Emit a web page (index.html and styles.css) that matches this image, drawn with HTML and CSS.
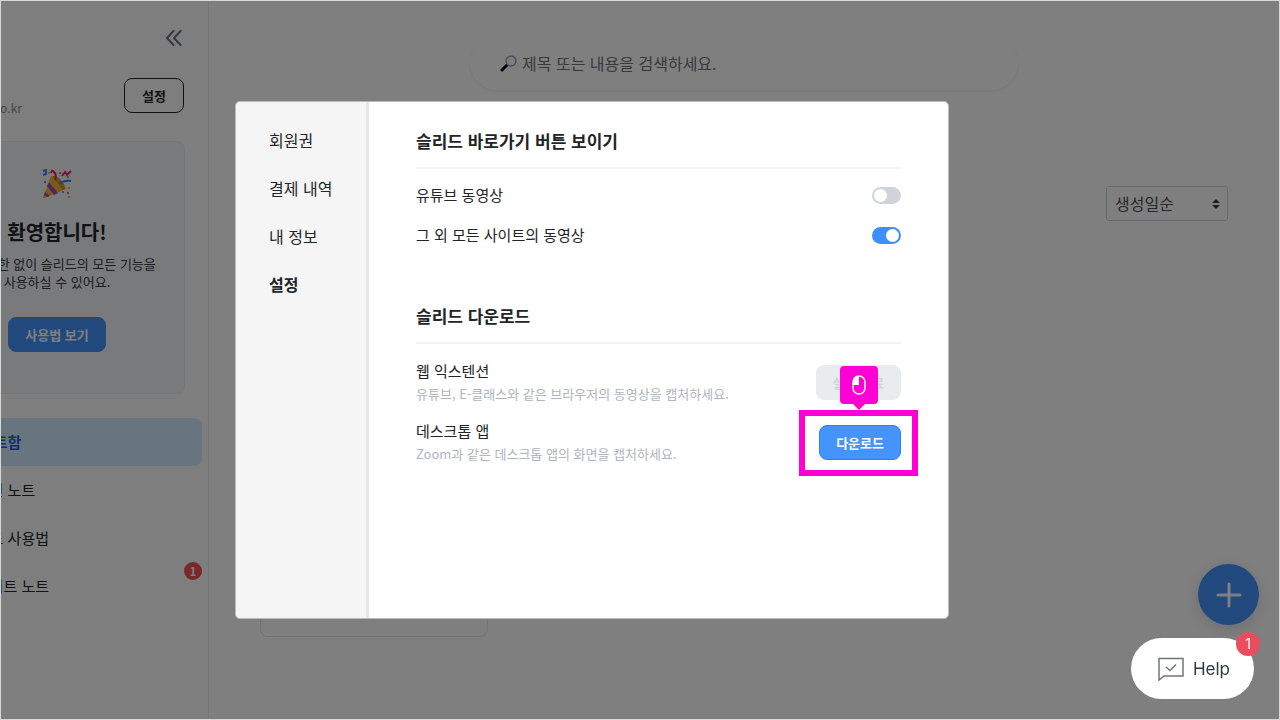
FILE: index.html
```html
<!DOCTYPE html>
<html lang="ko">
  <head>
    <meta charset="UTF-8" />
    <meta name="viewport" content="width=device-width, initial-scale=1.0" />
    <title>슬리드 설정</title>
    <link rel="stylesheet" href="styles.css">
  </head>
  <body>
    <div class="app">
      <aside class="sidebar">
        <button type="button" class="collapse" aria-label="collapse">
          <svg width="16" height="16" viewBox="0 0 16 16" fill="none" stroke="#6c757d" stroke-width="2" stroke-linecap="round" stroke-linejoin="round">
            <path d="M7.500 1L1 8L7.500 15M14.500 1L8 8L14.500 15" />
          </svg>
        </button>
        <div class="account">
          <span class="email">co.kr</span>
          <button type="button" class="settings-button">설정</button>
        </div>
        <div class="welcome">
          <svg class="party" width="32" height="32" viewBox="0 0 32 32" fill="none">
            <path d="M10 7L2 28Q2 30 4 29L25 20Q22 10 10 7Z" fill="#f5b72c" />
            <path d="M8 13L17 24L13 26L6 17Z" fill="#a04bc4" />
            <path d="M11 7L22 21L24 20Q23 12 15 7Z" fill="#d9951c" />
            <path d="M4 23L9 27L6 28L3 26Z" fill="#a04bc4" />
            <path d="M18 15Q23 11 30 12" stroke="#3b8bea" stroke-width="2" />
            <path d="M14 11Q16 6 13 3Q11 0 10 4" stroke="#e0245e" stroke-width="2" />
            <path d="M21 7L24 3L26 6L30 2" stroke="#e0245e" stroke-width="2" />
            <path d="M2 2L5 1L5 5L2 6" stroke="#3b8bea" stroke-width="2" />
            <g fill="#e0245e"><circle cx="19" cy="4" r="1" /><circle cx="4" cy="13" r="1" /><circle cx="27" cy="24" r="1" /></g>
            <g fill="#3b8bea"><circle cx="22" cy="23" r="1" /><circle cx="27" cy="8" r="1" /></g>
            <g fill="#f09a28"><circle cx="8" cy="4" r="1" /><circle cx="28" cy="19" r="1" /><circle cx="28" cy="28" r="1" /></g>
          </svg>
          <h2 class="welcome-title">환영합니다!</h2>
          <p class="welcome-text">기간 제한 없이 슬리드의 모든 기능을<br />사용하실 수 있어요.</p>
          <button type="button" class="primary-button">사용법 보기</button>
        </div>
        <nav class="menu">
          <a href="#" class="menu-item active">내 노트함</a>
          <a href="#" class="menu-item">공유된 노트</a>
          <a href="#" class="menu-item">슬리드 사용법</a>
          <a href="#" class="menu-item">업데이트 노트<span class="menu-badge">1</span></a>
        </nav>
      </aside>

      <main class="content">
        <label class="search">
          <svg width="18" height="18" viewBox="0 0 18 18" fill="none">
            <path d="M7 11L2 16" stroke="#000" stroke-width="3" stroke-linecap="round" />
            <circle cx="11" cy="7" r="5" fill="#f4f8fb" stroke="#97a4b2" stroke-width="1.500" />
          </svg>
          <input type="text" class="search-input" placeholder="제목 또는 내용을 검색하세요." />
        </label>
        <div class="toolbar">
          <div class="sort">
            <select class="sort-select" aria-label="정렬">
              <option>생성일순</option>
            </select>
            <svg class="sort-arrows" width="8" height="10" viewBox="0 0 8 10" fill="#343a40">
              <path d="M4 0L8 4H0ZM4 10L0 6H8Z" />
            </svg>
          </div>
        </div>
        <div class="note-card"></div>
        <button type="button" class="add-button" aria-label="add">
          <svg width="26" height="26" viewBox="0 0 26 26" stroke="#fff" stroke-width="3" stroke-linecap="round">
            <path d="M13 2V24M2 13H24" />
          </svg>
        </button>
      </main>

      <div class="overlay">
        <div class="modal" role="dialog">
          <nav class="modal-nav">
            <a href="#" class="modal-link">회원권</a>
            <a href="#" class="modal-link">결제 내역</a>
            <a href="#" class="modal-link">내 정보</a>
            <a href="#" class="modal-link current">설정</a>
          </nav>
          <div class="modal-body">
            <section class="section">
              <h3 class="section-title">슬리드 바로가기 버튼 보이기</h3>
              <div class="toggle-row">
                <label for="youtube">유튜브 동영상</label>
                <input type="checkbox" id="youtube" class="toggle" />
              </div>
              <div class="toggle-row">
                <label for="others">그 외 모든 사이트의 동영상</label>
                <input type="checkbox" id="others" class="toggle" checked />
              </div>
            </section>
            <section class="section">
              <h3 class="section-title">슬리드 다운로드</h3>
              <div class="downloads">
                <div class="download-row">
                  <div>
                    <p class="download-name">웹 익스텐션</p>
                    <p class="download-text">유튜브, E-클래스와 같은 브라우저의 동영상을 캡처하세요.</p>
                  </div>
                  <button type="button" class="primary-button disabled" disabled>설치 완료</button>
                </div>
                <div class="download-row">
                  <div>
                    <p class="download-name">데스크톱 앱</p>
                    <p class="download-text">Zoom과 같은 데스크톱 앱의 화면을 캡처하세요.</p>
                  </div>
                  <div class="guide">
                    <button type="button" class="primary-button outlined">다운로드</button>
                    <div class="guide-box"></div>
                    <div class="guide-tip">
                      <svg width="14" height="20" viewBox="0 0 14 20" fill="none">
                        <path d="M7 1Q1 1 1 7V10H7Z" fill="#fff" />
                        <rect x="1" y="1" width="12" height="18" rx="6" stroke="#fff" stroke-width="1.500" />
                      </svg>
                    </div>
                  </div>
                </div>
              </div>
            </section>
          </div>
        </div>
      </div>
    </div>

    <button type="button" class="help">
      <svg width="26" height="24" viewBox="0 0 26 24" fill="none" stroke="#6c757d" stroke-width="1.500">
        <path d="M1 1.500H25V19H6L1 23ZM8 10L12 13.500L18 7.500" />
      </svg>
      Help
      <span class="help-badge">1</span>
    </button>
  </body>
</html>
```

FILE: styles.css
```css
* {
  box-sizing: border-box;
}

body {
  margin: 0;
  min-height: 100vh;
  display: flex;
  border: 1px solid #d5d8d6;
  overflow: hidden;
  font-family: "Noto Sans CJK KR", sans-serif;
  font-size: 15px;
  line-height: 24px;
  color: #212529;
}

button,
input,
select {
  font-family: inherit;
}

h2,
h3,
p {
  margin: 0;
}

a {
  color: inherit;
  text-decoration: none;
}

/* the left part of the sidebar is scrolled out of view */
.app {
  position: relative;
  flex: 1;
  display: flex;
  margin-left: -96px;
  background-color: #fff;
}

/* Sidebar */
.sidebar {
  width: 304px;
  padding: 29px 24px 0;
  background-color: #fcfcfc;
  border-right: 1px solid #e9e9e9;
}

.collapse {
  display: block;
  margin: 0 2px 0 auto;
  padding: 0;
  height: 18px;
  border: none;
  background: none;
}

.account {
  display: flex;
  justify-content: space-between;
  margin-top: 30px;
}

.email {
  width: 93px;
  padding-top: 18px;
  text-align: right;
  font-size: 12px;
  color: #868e96;
}

.settings-button {
  height: 35px;
  padding: 0 17px;
  background: none;
  border: 1px solid #212529;
  border-radius: 8px;
  font-size: 13px;
  font-weight: 700;
  color: #212529;
}

.welcome {
  display: flex;
  flex-direction: column;
  align-items: center;
  height: 253px;
  margin-top: 27px;
  padding-top: 27px;
  margin-right: -1px;
  background-color: #f1f5f9;
  border: 1px solid #e9ecef;
  border-radius: 8px;
}

.account + .welcome {
  margin-top: 21px;
}

.party {
  flex-shrink: 0;
}

.welcome-title {
  margin: 16px 0 8px;
  font-size: 20px;
  line-height: 30px;
}

.welcome-text {
  margin-bottom: 26px;
  text-align: center;
  white-space: nowrap;
  font-size: 13px;
  line-height: 18px;
  color: #343a40;
}

.primary-button {
  height: 35px;
  padding: 0 16px;
  background-color: #4593fc;
  border: 1px solid #4593fc;
  border-radius: 8px;
  font-size: 13px;
  font-weight: 700;
  color: #fff;
}

.menu {
  margin: 24px -18px 0 -16px;
}

.menu-item {
  position: relative;
  display: block;
  padding: 12px 0 12px 49px;
  border-radius: 8px;
  line-height: 24px;
}

.menu-item.active {
  background-color: #d0ebff;
  color: #1c5fd0;
  font-weight: 700;
}

.menu-badge {
  position: absolute;
  top: 0;
  right: 0;
  width: 18px;
  height: 18px;
  border-radius: 50%;
  background-color: #f04e56;
  color: #fff;
  font-size: 11px;
  font-weight: 700;
  line-height: 18px;
  text-align: center;
}

/* Notes */
.content {
  flex: 1;
  padding: 35px 51px 0;
}

.search {
  display: flex;
  align-items: center;
  gap: 4px;
  max-width: 548px;
  height: 54px;
  margin: 0 auto;
  padding: 0 30px;
  border-radius: 27px;
  box-shadow: 0 1px 3px rgba(0, 0, 0, 0.08);
}

.search-input {
  flex: 1;
  padding: 0;
  border: none;
  background: none;
  font-size: 16px;
}

.search-input::placeholder {
  color: #6c757d;
}

.toolbar {
  display: flex;
  justify-content: flex-end;
  margin: 96px 0 24px;
}

.sort {
  position: relative;
}

.sort-select {
  appearance: none;
  width: 122px;
  height: 35px;
  padding: 0 8px 2px;
  background: none;
  border: 1px solid #ced4da;
  border-radius: 3px;
  font-size: 16px;
  color: #495057;
}

.sort-arrows {
  position: absolute;
  top: 13px;
  right: 8px;
}

.note-card {
  width: 228px;
  height: 392px;
  border: 1px solid #e4e4e4;
  border-radius: 8px;
}

.add-button {
  position: absolute;
  right: 20px;
  bottom: 94px;
  display: flex;
  align-items: center;
  justify-content: center;
  width: 61px;
  height: 61px;
  padding: 0;
  border: none;
  border-radius: 50%;
  background-color: #4593fc;
  box-shadow: 0 4px 16px rgba(0, 0, 0, 0.15);
}

/* Settings modal */
.overlay {
  position: absolute;
  inset: 0;
  display: flex;
  align-items: center;
  justify-content: center;
  background-color: rgba(0, 0, 0, 0.5);
}

.modal {
  display: flex;
  width: 714px;
  min-height: 518px;
  background-color: #fff;
  border: 1px solid #bbb;
  border-radius: 5px;
  overflow: hidden;
}

.modal-nav {
  display: flex;
  flex-direction: column;
  gap: 24px;
  width: 133px;
  padding: 26px 0 0 33px;
  background-color: #f5f5f5;
  border-right: 3px solid #e6e6e6;
  font-size: 16px;
}

.current {
  font-weight: 700;
}

.modal-body {
  flex: 1;
  padding: 27px 47px 0;
}

.section {
  margin-bottom: 49px;
}

.section-title {
  margin-bottom: 6px;
  padding-bottom: 14px;
  border-bottom: 2px solid #f2f2f2;
  font-size: 17px;
}

.toggle-row {
  display: flex;
  align-items: center;
  justify-content: space-between;
  height: 40px;
}

.toggle {
  appearance: none;
  width: 29px;
  height: 17px;
  margin: 0;
  padding: 2px;
  border-radius: 9px;
  background-color: #ced4da;
}

.toggle::before {
  content: "";
  display: block;
  width: 13px;
  height: 13px;
  border-radius: 50%;
  background-color: #fff;
}

.toggle:checked {
  background-color: #3d8ffc;
}

.toggle:checked::before {
  margin-left: auto;
}

.downloads {
  padding-top: 2px;
}

.download-row {
  display: flex;
  justify-content: space-between;
  align-items: center;
  height: 60px;
}

.download-text {
  font-size: 13px;
  line-height: 22px;
  color: #adb5bd;
}

.disabled {
  background-color: #e9ecef;
  border-color: #e9ecef;
  color: #ced4da;
}

.outlined {
  border-color: #2684fb;
}

/* Click guide over the download button */
.guide {
  position: relative;
}

.guide-box {
  position: absolute;
  inset: -15px -17px -16px -20px;
  border: 6px solid #ff00d4;
}

.guide-tip {
  position: absolute;
  top: -59px;
  left: 21px;
  display: flex;
  align-items: center;
  justify-content: center;
  width: 38px;
  height: 38px;
  border-radius: 4px;
  background-color: #ff00d4;
}

.guide-tip::after {
  content: "";
  position: absolute;
  top: 38px;
  border: 6px solid transparent;
  border-top-color: #ff00d4;
  border-bottom: none;
}

/* Help */
.help {
  position: fixed;
  right: 26px;
  bottom: 21px;
  display: flex;
  align-items: center;
  gap: 9px;
  height: 61px;
  padding: 0 24px 0 27px;
  border: none;
  border-radius: 31px;
  background-color: #fff;
  font-family: Inter, sans-serif;
  font-size: 17px;
  color: #2f3941;
}

.help-badge {
  position: absolute;
  top: -6px;
  right: -6px;
  width: 24px;
  height: 24px;
  border-radius: 50%;
  background-color: #eb4d5c;
  color: #fff;
  font-size: 14px;
  line-height: 24px;
}
```
